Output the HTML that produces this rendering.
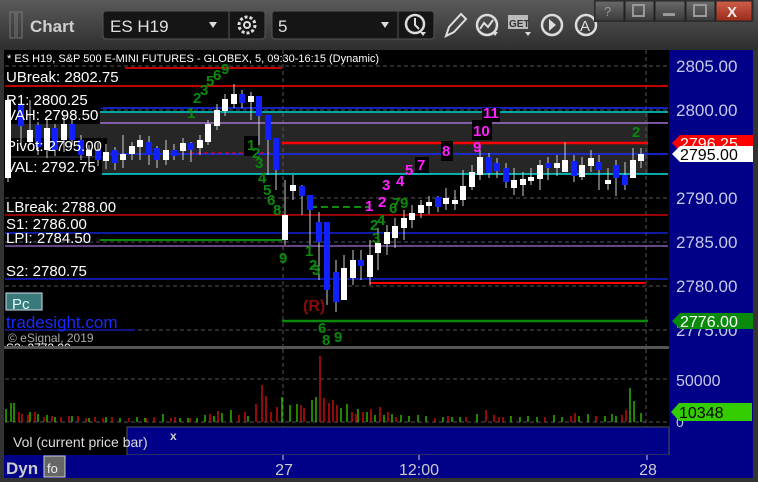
<!DOCTYPE html>
<html><head><meta charset="utf-8"><style>
html,body{margin:0;padding:0;background:#2b2b2b;width:758px;height:482px;overflow:hidden}
svg{display:block}
text{font-family:"Liberation Sans",sans-serif}
</style></head><body>
<svg width="758" height="482" viewBox="0 0 758 482" xmlns="http://www.w3.org/2000/svg">
<defs>
<linearGradient id="tb" x1="0" y1="0" x2="0" y2="1"><stop offset="0" stop-color="#5a5a5a"/><stop offset="1" stop-color="#2e2e2e"/></linearGradient>
<linearGradient id="wb" x1="0" y1="0" x2="0" y2="1"><stop offset="0" stop-color="#6a6a6a"/><stop offset="1" stop-color="#3a3a3a"/></linearGradient>
<linearGradient id="xb" x1="0" y1="0" x2="0" y2="1"><stop offset="0" stop-color="#d0604a"/><stop offset="1" stop-color="#9a2a1a"/></linearGradient>
</defs>
<rect x="0" y="0" width="758" height="482" fill="#333"/>
<rect x="0" y="0" width="758" height="50" fill="url(#tb)"/>
<rect x="10" y="12" width="5" height="26" fill="none" stroke="#777"/>
<rect x="17" y="12" width="5" height="26" fill="none" stroke="#777"/>
<text x="30" y="32" font-size="17" font-weight="bold" fill="#cfcfcf">Chart</text>
<rect x="103" y="11" width="162" height="28" rx="3" fill="#151515" stroke="#555"/>
<line x1="229" y1="11" x2="229" y2="39" stroke="#555"/>
<text x="110" y="32" font-size="17" fill="#e0e0e0">ES H19</text>
<path d="M209 22 l8 0 l-4 6z" fill="#ddd"/>
<circle cx="247" cy="25" r="8" fill="none" stroke="#ddd" stroke-width="3" stroke-dasharray="3 2"/><circle cx="247" cy="25" r="3" fill="none" stroke="#ddd" stroke-width="2"/>
<rect x="272" y="11" width="162" height="28" rx="3" fill="#151515" stroke="#555"/>
<line x1="398" y1="11" x2="398" y2="39" stroke="#555"/>
<text x="278" y="32" font-size="17" fill="#e0e0e0">5</text>
<path d="M381 22 l8 0 l-4 6z" fill="#ddd"/>
<circle cx="415" cy="24" r="9" fill="none" stroke="#ddd" stroke-width="2.5"/><path d="M415 18 v7 l4 4" stroke="#ddd" stroke-width="2" fill="none"/><path d="M420 32 h6 l-3 4z" fill="#ddd"/>
<path d="M446 36 l3 -9 l12 -13 l5 5 l-12 13z" fill="none" stroke="#ddd" stroke-width="2"/>
<circle cx="487" cy="25" r="10" fill="none" stroke="#ddd" stroke-width="2.5"/><path d="M480 29 l4 -6 l4 4 l5 -7" stroke="#ddd" stroke-width="2" fill="none"/><path d="M492 32 h6 l-3 4z" fill="#ddd"/>
<rect x="508" y="15" width="20" height="14" fill="#bbb"/><text x="509" y="27" font-size="10" font-weight="bold" fill="#333">GET</text><path d="M525 32 h6 l-3 4z" fill="#ddd"/>
<circle cx="552" cy="25" r="10" fill="none" stroke="#ddd" stroke-width="2.5"/><path d="M549 19 l7 6 l-7 6z" fill="#ddd"/>
<circle cx="586" cy="25" r="10" fill="none" stroke="#ddd" stroke-width="2.5"/><text x="580" y="31" font-size="15" fill="#ddd">A</text>
<rect x="594" y="0" width="160" height="22" fill="#3a3a3a"/>
<rect x="595" y="1" width="29" height="20" fill="url(#wb)" stroke="#222"/><text x="604" y="16" font-size="13" fill="#999">?</text>
<rect x="625" y="1" width="29" height="20" fill="url(#wb)" stroke="#222"/><rect x="633" y="5" width="11" height="11" fill="none" stroke="#999" stroke-width="2"/>
<rect x="655" y="1" width="30" height="20" fill="url(#wb)" stroke="#222"/><rect x="663" y="13" width="12" height="3" fill="#999"/>
<rect x="686" y="1" width="29" height="20" fill="url(#wb)" stroke="#222"/><rect x="694" y="5" width="12" height="11" fill="none" stroke="#999" stroke-width="2"/>
<rect x="716" y="1" width="36" height="20" fill="url(#xb)" stroke="#222"/><text x="727" y="17" font-size="15" font-weight="bold" fill="#eee">X</text>

<rect x="4" y="50" width="665" height="296" fill="#000"/>
<rect x="669" y="50" width="84" height="428" fill="#000088"/>
<rect x="5" y="113" width="643" height="61" fill="#262626"/>
<g stroke="#555" stroke-dasharray="4 3" stroke-width="1">
<line x1="5" y1="66" x2="668" y2="66"/><line x1="5" y1="110" x2="668" y2="110"/><line x1="5" y1="198" x2="668" y2="198"/><line x1="5" y1="242" x2="668" y2="242"/><line x1="5" y1="286" x2="668" y2="286"/><line x1="5" y1="330" x2="668" y2="330"/>
<line x1="283" y1="50" x2="283" y2="346"/><line x1="646" y1="50" x2="646" y2="346"/>
</g>
<line x1="5" y1="86" x2="668" y2="86" stroke="#f00" stroke-width="1.5"/>
<line x1="125" y1="68" x2="282" y2="68" stroke="#f00" stroke-width="1.5"/>
<line x1="5" y1="108" x2="668" y2="108" stroke="#1a2aff" stroke-width="1.5"/>
<line x1="5" y1="112" x2="668" y2="112" stroke="#00e0e0" stroke-width="1.5"/>
<line x1="5" y1="123" x2="668" y2="123" stroke="#a070d0" stroke-width="1.5"/>
<line x1="282" y1="143" x2="648" y2="143" stroke="#f00" stroke-width="2.5"/>
<line x1="5" y1="154" x2="668" y2="154" stroke="#1a2aff" stroke-width="1.5"/>
<line x1="190" y1="153" x2="270" y2="153" stroke="#f00" stroke-dasharray="4 3"/>
<line x1="5" y1="174" x2="668" y2="174" stroke="#00e0e0" stroke-width="1.5"/>
<line x1="5" y1="215" x2="668" y2="215" stroke="#e00" stroke-width="1.2"/>
<line x1="310" y1="207" x2="370" y2="207" stroke="#0a8a0a" stroke-width="2" stroke-dasharray="7 4"/>
<line x1="5" y1="233" x2="668" y2="233" stroke="#1a2aff" stroke-width="1.2"/>
<line x1="100" y1="240" x2="282" y2="240" stroke="#0a8a0a" stroke-width="2"/>
<line x1="5" y1="246" x2="668" y2="246" stroke="#a070d0" stroke-width="1.2"/>
<line x1="5" y1="279" x2="668" y2="279" stroke="#1a2aff" stroke-width="1.2"/>
<line x1="370" y1="283" x2="645" y2="283" stroke="#f00" stroke-width="2"/>
<line x1="282" y1="321" x2="648" y2="321" stroke="#0a8a0a" stroke-width="2.5"/>

<!-- label backgrounds -->
<g fill="#000">
<rect x="5" y="90" width="98" height="18"/><rect x="5" y="108" width="95" height="16"/><rect x="5" y="138" width="102" height="18"/><rect x="5" y="158" width="97" height="18"/>
</g>

<g stroke="#ccc" stroke-width="1">
<line x1="8" y1="95" x2="8" y2="182"/><line x1="21" y1="110" x2="21" y2="145"/><line x1="30" y1="100" x2="30" y2="145"/><line x1="38" y1="122" x2="38" y2="155"/><line x1="47" y1="120" x2="47" y2="158"/><line x1="55" y1="124" x2="55" y2="156"/><line x1="64" y1="115" x2="64" y2="152"/><line x1="72" y1="118" x2="72" y2="145"/><line x1="81" y1="135" x2="81" y2="160"/><line x1="89" y1="145" x2="89" y2="170"/><line x1="98" y1="143" x2="98" y2="166"/><line x1="106" y1="144" x2="106" y2="169"/><line x1="115" y1="147" x2="115" y2="170"/><line x1="123" y1="135" x2="123" y2="168"/><line x1="132" y1="142" x2="132" y2="160"/><line x1="140" y1="135" x2="140" y2="160"/><line x1="149" y1="136" x2="149" y2="165"/><line x1="157" y1="146" x2="157" y2="168"/><line x1="166" y1="140" x2="166" y2="165"/><line x1="174" y1="144" x2="174" y2="160"/><line x1="183" y1="138" x2="183" y2="160"/><line x1="191" y1="142" x2="191" y2="162"/><line x1="200" y1="135" x2="200" y2="155"/><line x1="208" y1="120" x2="208" y2="145"/><line x1="217" y1="104" x2="217" y2="130"/><line x1="225" y1="94" x2="225" y2="116"/><line x1="234" y1="84" x2="234" y2="108"/><line x1="242" y1="90" x2="242" y2="108"/><line x1="251" y1="92" x2="251" y2="120"/><line x1="259" y1="108" x2="259" y2="145"/><line x1="268" y1="135" x2="268" y2="175"/><line x1="276" y1="160" x2="276" y2="190"/><line x1="285" y1="180" x2="285" y2="245"/><line x1="293" y1="175" x2="293" y2="200"/><line x1="302" y1="185" x2="302" y2="215"/><line x1="310" y1="205" x2="310" y2="245"/><line x1="319" y1="212" x2="319" y2="280"/><line x1="327" y1="230" x2="327" y2="305"/><line x1="336" y1="260" x2="336" y2="312"/><line x1="344" y1="255" x2="344" y2="300"/><line x1="353" y1="250" x2="353" y2="285"/><line x1="361" y1="250" x2="361" y2="280"/><line x1="370" y1="240" x2="370" y2="285"/><line x1="378" y1="228" x2="378" y2="270"/><line x1="387" y1="225" x2="387" y2="255"/><line x1="395" y1="218" x2="395" y2="248"/><line x1="404" y1="210" x2="404" y2="240"/><line x1="412" y1="205" x2="412" y2="228"/><line x1="421" y1="200" x2="421" y2="218"/><line x1="429" y1="196" x2="429" y2="214"/><line x1="438" y1="196" x2="438" y2="212"/><line x1="446" y1="188" x2="446" y2="210"/><line x1="455" y1="190" x2="455" y2="210"/><line x1="463" y1="170" x2="463" y2="206"/><line x1="472" y1="165" x2="472" y2="190"/><line x1="480" y1="150" x2="480" y2="180"/><line x1="489" y1="153" x2="489" y2="178"/><line x1="497" y1="158" x2="497" y2="178"/><line x1="506" y1="163" x2="506" y2="188"/><line x1="514" y1="168" x2="514" y2="195"/><line x1="523" y1="172" x2="523" y2="196"/><line x1="531" y1="168" x2="531" y2="185"/><line x1="540" y1="160" x2="540" y2="190"/><line x1="548" y1="157" x2="548" y2="180"/><line x1="557" y1="155" x2="557" y2="176"/><line x1="565" y1="142" x2="565" y2="172"/><line x1="574" y1="155" x2="574" y2="182"/><line x1="582" y1="157" x2="582" y2="180"/><line x1="591" y1="150" x2="591" y2="172"/><line x1="599" y1="155" x2="599" y2="190"/><line x1="608" y1="168" x2="608" y2="190"/><line x1="616" y1="160" x2="616" y2="196"/><line x1="625" y1="162" x2="625" y2="190"/><line x1="633" y1="148" x2="633" y2="178"/><line x1="641" y1="148" x2="641" y2="168"/>
</g>
<g fill="#fff">
<rect x="5" y="100" width="6" height="78"/><rect x="27" y="130" width="6" height="12"/><rect x="44" y="128" width="6" height="22"/><rect x="61" y="124" width="6" height="16"/><rect x="86" y="150" width="6" height="6"/><rect x="103" y="152" width="6" height="9"/><rect x="120" y="154" width="6" height="6"/><rect x="129" y="146" width="6" height="8"/><rect x="137" y="140" width="6" height="7"/><rect x="163" y="150" width="6" height="10"/><rect x="180" y="143" width="6" height="8"/><rect x="197" y="140" width="6" height="8"/><rect x="205" y="124" width="6" height="18"/><rect x="214" y="110" width="6" height="16"/><rect x="222" y="99" width="6" height="12"/><rect x="231" y="94" width="6" height="10"/><rect x="248" y="96" width="6" height="6"/><rect x="282" y="215" width="6" height="25"/><rect x="290" y="185" width="6" height="6"/><rect x="341" y="268" width="6" height="32"/><rect x="350" y="260" width="6" height="18"/><rect x="367" y="255" width="6" height="22"/><rect x="375" y="243" width="6" height="10"/><rect x="384" y="232" width="6" height="12"/><rect x="392" y="226" width="6" height="12"/><rect x="401" y="218" width="6" height="10"/><rect x="409" y="213" width="6" height="7"/><rect x="418" y="205" width="6" height="8"/><rect x="426" y="202" width="6" height="4"/><rect x="443" y="198" width="6" height="6"/><rect x="452" y="200" width="6" height="4"/><rect x="460" y="186" width="6" height="14"/><rect x="469" y="172" width="6" height="15"/><rect x="477" y="157" width="6" height="18"/><rect x="511" y="180" width="6" height="8"/><rect x="520" y="179" width="6" height="6"/><rect x="528" y="177" width="6" height="4"/><rect x="537" y="165" width="6" height="14"/><rect x="554" y="163" width="6" height="5"/><rect x="562" y="160" width="6" height="12"/><rect x="579" y="165" width="6" height="12"/><rect x="588" y="158" width="6" height="8"/><rect x="605" y="180" width="6" height="4"/><rect x="630" y="160" width="6" height="18"/><rect x="638" y="154" width="6" height="7"/>
</g>
<g fill="#1020ff">
<rect x="18" y="104" width="6" height="22"/><rect x="35" y="125" width="6" height="22"/><rect x="52" y="128" width="6" height="22"/><rect x="69" y="124" width="6" height="16"/><rect x="78" y="140" width="6" height="15"/><rect x="95" y="150" width="6" height="10"/><rect x="112" y="150" width="6" height="13"/><rect x="146" y="142" width="6" height="13"/><rect x="154" y="148" width="6" height="12"/><rect x="171" y="150" width="6" height="6"/><rect x="188" y="143" width="6" height="7"/><rect x="239" y="94" width="6" height="9"/><rect x="256" y="96" width="6" height="20"/><rect x="265" y="115" width="6" height="25"/><rect x="273" y="138" width="6" height="32"/><rect x="299" y="186" width="6" height="10"/><rect x="307" y="195" width="6" height="15"/><rect x="316" y="222" width="6" height="20"/><rect x="324" y="222" width="6" height="68"/><rect x="333" y="272" width="6" height="30"/><rect x="358" y="260" width="6" height="6"/><rect x="435" y="197" width="6" height="10"/><rect x="486" y="157" width="6" height="16"/><rect x="494" y="163" width="6" height="8"/><rect x="503" y="168" width="6" height="14"/><rect x="545" y="163" width="6" height="5"/><rect x="571" y="161" width="6" height="15"/><rect x="596" y="162" width="6" height="8"/><rect x="613" y="165" width="6" height="13"/><rect x="622" y="175" width="6" height="10"/>
</g>

<g font-size="15" fill="#0a8a0a" font-weight="bold">
<text x="193" y="103">2</text><text x="200" y="95">3</text><text x="206" y="86">5</text><text x="213" y="80">6</text><text x="221" y="74">9</text>
<text x="187" y="118">1</text>
<rect x="244" y="136" width="14" height="20" fill="#000"/><text x="247" y="150">1</text><text x="252" y="158">2</text><text x="255" y="168">3</text><text x="258" y="183">4</text><text x="263" y="195">5</text><text x="267" y="205">6</text><text x="273" y="215">8</text>
<text x="279" y="263">9</text><text x="305" y="256">1</text><text x="309" y="270">2</text><text x="312" y="275">3</text>
<text x="318" y="333">6</text><text x="322" y="345">8</text><text x="334" y="342">9</text>
<text x="370" y="230">2</text><text x="377" y="225">4</text><text x="389" y="213">6</text><text x="392" y="208">7</text><text x="400" y="208">9</text><text x="372" y="243">3</text>
<text x="632" y="137">2</text>
</g>
<text x="303" y="311" font-size="16" font-weight="bold" fill="#8a0a0a">(R)</text>
<g font-size="15" fill="#ff22ff" font-weight="bold">
<text x="365" y="211">1</text><text x="378" y="207">2</text><text x="382" y="190">3</text><text x="396" y="186">4</text><text x="405" y="175">5</text>
<rect x="415" y="157" width="14" height="16" fill="#000"/><text x="417" y="170">7</text>
<rect x="441" y="141" width="12" height="20" fill="#000"/><text x="442" y="156">8</text>
<text x="473" y="152">9</text>
<rect x="472" y="120" width="20" height="20" fill="#000"/><text x="473" y="136">10</text>
<rect x="482" y="108" width="18" height="14" fill="#000"/><text x="483" y="118">11</text>
</g>

<text x="7" y="62" font-size="11" fill="#fff">* ES H19, S&amp;P 500 E-MINI FUTURES - GLOBEX, 5, 09:30-16:15 (Dynamic)</text>
<g font-size="15" fill="#fff">
<text x="6" y="82">UBreak: 2802.75</text>
<text x="6" y="105">R1: 2800.25</text>
<text x="6" y="120">VAH: 2798.50</text>
<text x="6" y="151">Pivot: 2795.00</text>
<text x="6" y="172">VAL: 2792.75</text>
<text x="6" y="212">LBreak: 2788.00</text>
<text x="6" y="229">S1: 2786.00</text>
<text x="6" y="243">LPI: 2784.50</text>
<text x="6" y="276">S2: 2780.75</text>
</g>
<rect x="6" y="293" width="36" height="17" fill="#3a7a7a" stroke="#cde" stroke-width="1"/>
<text x="12" y="309" font-size="15" fill="#dff">Pc</text>
<text x="6" y="328" font-size="17" fill="#1a2aff">tradesight.com</text>
<line x1="6" y1="330" x2="135" y2="330" stroke="#1a2aff"/>
<text x="8" y="342" font-size="12" fill="#aaa">© eSignal, 2019</text>
<text x="6" y="352" font-size="12" fill="#fff">S3: 2772.00</text>

<g font-size="17" fill="#c8c8e8">
<text x="676" y="72">2805.00</text><text x="676" y="116">2800.00</text><text x="676" y="204">2790.00</text><text x="676" y="248">2785.00</text><text x="676" y="292">2780.00</text><text x="676" y="336">2775.00</text>
</g>
<path d="M672 143 l8 -8 h73 v16 h-73z" fill="#f00"/><text x="680" y="149" font-size="16" fill="#fff">2796.25</text>
<path d="M672 154 l8 -8 h73 v16 h-73z" fill="#fff"/><text x="680" y="160" font-size="16" fill="#000">2795.00</text>
<path d="M672 321 l8 -8 h73 v16 h-73z" fill="#0a8a0a"/><text x="680" y="327" font-size="16" fill="#fff">2776.00</text>

<rect x="4" y="346" width="665" height="3" fill="#555"/>
<rect x="4" y="349" width="665" height="78" fill="#000"/>
<g stroke="#555" stroke-dasharray="4 3"><line x1="5" y1="379" x2="668" y2="379"/><line x1="5" y1="422" x2="668" y2="422"/><line x1="283" y1="349" x2="283" y2="427"/><line x1="646" y1="349" x2="646" y2="427"/></g>
<g stroke-width="1.3">
<path stroke="#33cc00" d="M6 422v-13M11 422v-19M14 422v-19M30 422v-10M38 422v-8M47 422v-7M55 422v-5M72 422v-6M89 422v-4M106 422v-5M120 422v-4M137 422v-5M145 422v-4M163 422v-8M180 422v-4M188 422v-4M197 422v-4M205 422v-7M214 422v-6M222 422v-9M231 422v-12M248 422v-6M282 422v-25M290 422v-17M297 422v-18M312 422v-22M316 422v-25M341 422v-14M347 422v-18M358 422v-13M367 422v-10M375 422v-7M384 422v-7M392 422v-8M401 422v-7M409 422v-6M418 422v-7M426 422v-6M443 422v-5M452 422v-5M460 422v-5M477 422v-8M511 422v-6M520 422v-5M528 422v-6M537 422v-5M554 422v-7M562 422v-5M579 422v-6M588 422v-8M605 422v-6M612 422v-8M616 422v-6M630 422v-34M634 422v-21M641 422v-9"/>
<path stroke="#e01010" d="M19 422v-10M22 422v-8M28 422v-7M35 422v-10M44 422v-5M52 422v-6M61 422v-5M69 422v-6M78 422v-6M86 422v-4M95 422v-5M103 422v-4M112 422v-5M129 422v-4M146 422v-4M154 422v-5M171 422v-4M175 422v-5M190 422v-4M210 422v-8M218 422v-11M239 422v-7M245 422v-10M256 422v-18M262 422v-37M266 422v-26M271 422v-10M277 422v-15M301 422v-17M304 422v-14M320 422v-66M324 422v-24M329 422v-19M333 422v-22M337 422v-17M352 422v-10M356 422v-8M363 422v-10M371 422v-13M380 422v-15M388 422v-10M396 422v-5M435 422v-4M448 422v-6M466 422v-5M486 422v-12M494 422v-7M499 422v-5M503 422v-5M545 422v-5M571 422v-6M575 422v-9M596 422v-6M622 422v-7M626 422v-12"/>
</g>
<text x="676" y="386" font-size="16" fill="#c8c8e8">50000</text>
<text x="676" y="427" font-size="14" fill="#c8c8e8">0</text>
<path d="M671 412 l8 -9 h73 v18 h-73z" fill="#33cc00"/><text x="679" y="418" font-size="16" fill="#000">10348</text>

<rect x="4" y="427" width="123" height="28" fill="#000"/>
<rect x="127" y="427" width="542" height="28" fill="#000088" stroke="#555"/>
<text x="13" y="447" font-size="14" fill="#ddd">Vol (current price bar)</text>
<text x="170" y="440" font-size="12" font-weight="bold" fill="#ccc">x</text>
<rect x="4" y="455" width="749" height="23" fill="#000088"/>
<text x="6" y="474" font-size="17" font-weight="bold" fill="#ccc">Dyn</text>
<rect x="44" y="456" width="21" height="21" fill="#666" stroke="#ccc"/><text x="47" y="473" font-size="13" fill="#eee">fo</text>
<line x1="283" y1="455" x2="283" y2="460" stroke="#ccc"/><line x1="419" y1="455" x2="419" y2="460" stroke="#ccc"/><line x1="647" y1="455" x2="647" y2="460" stroke="#ccc"/>
<g font-size="16" fill="#ccc" text-anchor="middle"><text x="284" y="475">27</text><text x="419" y="475">12:00</text><text x="648" y="475">28</text></g>
</svg>
</body></html>
